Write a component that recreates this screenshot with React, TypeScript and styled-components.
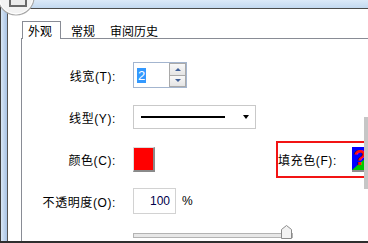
import React from "react";
import styled, { createGlobalStyle } from "styled-components";

const Global = createGlobalStyle`
  html, body { margin: 0; padding: 0; background: #fff; }
  * { box-sizing: border-box; }
`;

const Window = styled.div`
  position: relative;
  width: 368px;
  height: 243px;
  display: flex;
  overflow: hidden;
  background: #fff;
  border-bottom: 2px solid #2f2f2f;
  font-family: "Liberation Sans", "Noto Sans CJK SC", sans-serif;
  font-size: 12px;
  color: #000;
`;

const LeftFrame = styled.div`
  width: 8px;
  flex: none;
  border-left: 1px solid #3e3e3e;
  border-right: 1px solid #545454;
  background: linear-gradient(to right, #d9e7f6, #a8c3e5);
`;

const Main = styled.div`
  flex: 1;
  display: flex;
  flex-direction: column;
  min-width: 0;
`;

const TitleStrip = styled.div`
  height: 9px;
  flex: none;
  background: linear-gradient(#dbe9f8, #c3d9f0);
  border-bottom: 1px solid #4b4b4b;
`;

const Body = styled.div`
  flex: 1;
  display: flex;
  flex-direction: column;
  padding: 12px 0 0 13px;
  min-height: 0;
`;

const TabStrip = styled.div`
  display: flex;
  gap: 1px;
  height: 22px;
  padding-left: 1px;
  margin-bottom: -1px;
  position: relative;
  z-index: 1;
`;

const Tab = styled.div<{ $active?: boolean }>`
  display: flex;
  align-items: center;
  padding: ${(p) => (p.$active ? "0 8px 0 5px" : "0 6px")};
  margin-right: ${(p) => (p.$active ? "2px" : "0")};
  border: 1px solid ${(p) => (p.$active ? "#898c95" : "transparent")};
  border-bottom: none;
  background: ${(p) => (p.$active ? "#fff" : "transparent")};
  font-family: "Noto Sans CJK SC", sans-serif;
  font-size: 12px;
`;

const Panel = styled.div`
  flex: 1;
  border-top: 1px solid #898c95;
  border-left: 1px solid #898c95;
  background: #fff;
  padding-top: 15px;
`;

const Form = styled.div`
  display: grid;
  grid-template-columns: 96px 1fr;
  column-gap: 15px;
  grid-auto-rows: 42px;
  align-items: center;
`;

const Label = styled.div`
  justify-self: end;
  white-space: nowrap;
  letter-spacing: 0.6px;
  padding-right: 2px;
`;

const Cell = styled.div<{ $top?: boolean }>`
  display: flex;
  align-items: center;
  align-self: ${(p) => (p.$top ? "start" : "center")};
  margin-top: ${(p) => (p.$top ? "3px" : "0")};
  white-space: nowrap;
`;

const SpinBox = styled.div`
  width: 54px;
  height: 26px;
  border: 1px solid #a3b5cf;
  display: flex;
  align-items: center;
  justify-content: space-between;
  padding: 0 0 0 3px;
`;

const Selected = styled.span`
  background: #3399ff;
  color: #fff;
  font-size: 13px;
  line-height: 15px;
  padding: 0 1px;
`;

const SpinButtons = styled.div`
  width: 17px;
  height: 24px;
  display: flex;
  flex-direction: column;
`;

const SpinButton = styled.div<{ $down?: boolean }>`
  flex: 1;
  border: 1px solid #a9a9a9;
  border-top-width: ${(p) => (p.$down ? "0" : "1px")};
  background: linear-gradient(#f8f8f8, #e4e4e4);
  display: flex;
  align-items: center;
  justify-content: center;
  &::after {
    content: "";
    width: 0;
    height: 0;
    border-left: 3px solid transparent;
    border-right: 3px solid transparent;
    ${(p) =>
      p.$down
        ? "border-top: 3px solid #3e5f98;"
        : "border-bottom: 3px solid #3e5f98;"}
  }
`;

const Dropdown = styled.div`
  width: 123px;
  height: 24px;
  border: 1px solid #c9c9c9;
  display: flex;
  align-items: center;
  padding: 0 6px 0 7px;
`;

const LineSample = styled.div`
  width: 84px;
  height: 2px;
  background: #000;
`;

const DropArrow = styled.div`
  margin-left: auto;
  width: 0;
  height: 0;
  border-left: 3.5px solid transparent;
  border-right: 3.5px solid transparent;
  border-top: 4px solid #000;
`;

const ColorButton = styled.div<{ $color: string }>`
  width: 22px;
  height: 25px;
  background: ${(p) => p.$color};
  border-top: 1px solid #dcdcdc;
  border-left: 1px solid #dcdcdc;
  border-right: 2px solid #8a8a8a;
  border-bottom: 2px solid #8a8a8a;
`;

const FillGroup = styled.div`
  margin-left: 121px;
  height: 37px;
  width: 110px;
  flex: none;
  border: 2px solid #f21414;
  display: flex;
  align-items: center;
`;

const FillLabel = styled.div`
  width: 74px;
  letter-spacing: 0.6px;
`;

const Swatch = styled.div`
  position: relative;
  width: 16px;
  height: 25px;
  border-bottom: 2px solid #8f8f8f;
  flex: none;
  display: flex;
  align-items: center;
  justify-content: center;
  overflow: hidden;
`;

const SwatchArt = styled.svg`
  position: absolute;
  inset: 0;
`;

const Question = styled.span`
  position: relative;
  color: #ff1010;
  font-weight: bold;
  font-size: 22px;
  line-height: 1;
  font-family: "Liberation Sans", sans-serif;
`;

const TextBox = styled.div`
  width: 43px;
  height: 26px;
  border: 1px solid #d2d2d2;
  display: flex;
  align-items: center;
  justify-content: flex-end;
  padding-right: 5px;
  color: #00004a;
`;

const Unit = styled.span`
  margin-left: 6px;
`;

const Slider = styled.div`
  position: relative;
  width: 160px;
  height: 14px;
`;

const Track = styled.div`
  position: absolute;
  left: 0;
  right: 0;
  top: 8px;
  height: 5px;
  background: #e7e7e7;
  border: 1px solid #b3b3b3;
`;

const Thumb = styled.svg`
  position: absolute;
  left: 148px;
  top: 0;
`;

const SideStrip = styled.div`
  position: absolute;
  right: 0;
  top: 117px;
  width: 4px;
  height: 72px;
  background: #c6c6c6;
`;

const CornerButton = styled.svg`
  position: absolute;
  left: 0;
  top: 0;
`;

export default function App() {
  return (
    <>
      <Global />
      <Window>
        <LeftFrame />
        <Main>
          <TitleStrip />
          <Body>
            <TabStrip>
              <Tab $active>外观</Tab>
              <Tab>常规</Tab>
              <Tab>审阅历史</Tab>
            </TabStrip>
            <Panel>
              <Form>
                <Label>线宽(T):</Label>
                <Cell>
                  <SpinBox>
                    <Selected>2</Selected>
                    <SpinButtons>
                      <SpinButton />
                      <SpinButton $down />
                    </SpinButtons>
                  </SpinBox>
                </Cell>

                <Label>线型(Y):</Label>
                <Cell>
                  <Dropdown>
                    <LineSample />
                    <DropArrow />
                  </Dropdown>
                </Cell>

                <Label>颜色(C):</Label>
                <Cell>
                  <ColorButton $color="#ff0000" />
                  <FillGroup>
                    <FillLabel>填充色(F):</FillLabel>
                    <Swatch>
                      <SwatchArt width="16" height="23" viewBox="0 0 16 23">
                        <rect width="16" height="23" fill="#0000ff" />
                        <polygon points="0,23 16,9 16,23" fill="#00c800" />
                      </SwatchArt>
                      <Question>?</Question>
                    </Swatch>
                  </FillGroup>
                </Cell>

                <Label>不透明度(O):</Label>
                <Cell>
                  <TextBox>100</TextBox>
                  <Unit>%</Unit>
                </Cell>

                <Label />
                <Cell $top>
                  <Slider>
                    <Track />
                    <Thumb width="11" height="14" viewBox="0 0 11 14">
                      <path
                        d="M0.5,13.5 V4.5 L5.5,0.5 L10.5,4.5 V13.5 Z"
                        fill="#f2f2f2"
                        stroke="#8a8a8a"
                      />
                    </Thumb>
                  </Slider>
                </Cell>
              </Form>
            </Panel>
          </Body>
        </Main>
        <SideStrip />
        <CornerButton width="40" height="18" viewBox="0 0 40 18">
          <circle cx="16" cy="-3" r="18" fill="#f3f3f3" stroke="#a9a9a9" strokeWidth="1.2" />
          <circle cx="16" cy="-3" r="16.8" fill="none" stroke="#ffffff" strokeWidth="1" />
          <rect x="10" y="-4" width="16" height="10" fill="#ececec" stroke="#6a6a6a" strokeWidth="2" />
        </CornerButton>
      </Window>
    </>
  );
}
